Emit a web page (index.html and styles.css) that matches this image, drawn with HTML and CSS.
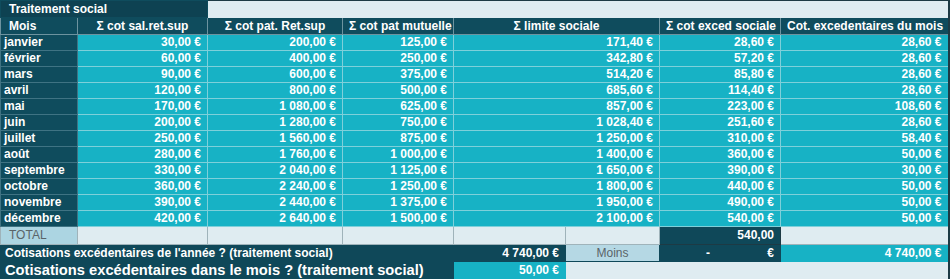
FILE: index.html
```html
<!DOCTYPE html>
<html lang="fr">
<head>
<meta charset="utf-8">
<title>Traitement social</title>
<link rel="stylesheet" href="styles.css">
</head>
<body>
<table class="sheet">
  <colgroup>
    <col class="c-mois"><col class="c-sal"><col class="c-pat"><col class="c-mut">
    <col class="c-lim1"><col class="c-lim2"><col class="c-exc"><col class="c-cot">
  </colgroup>
  <tr class="r-title">
    <td colspan="2" class="dark title">Traitement social</td>
    <td colspan="6" class="light"></td>
  </tr>
  <tr class="r-head">
    <th class="mois-h">Mois</th>
    <th>Σ cot sal.ret.sup</th>
    <th>Σ cot pat. Ret.sup</th>
    <th>Σ cot pat mutuelle</th>
    <th colspan="2">Σ limite sociale</th>
    <th>Σ cot exced sociale</th>
    <th>Cot. excedentaires du mois</th>
  </tr>
  <tr><td class="m">janvier</td><td class="v">30,00 €</td><td class="v">200,00 €</td><td class="v">125,00 €</td><td class="v" colspan="2">171,40 €</td><td class="v">28,60 €</td><td class="v">28,60 €</td></tr>
  <tr><td class="m">février</td><td class="v">60,00 €</td><td class="v">400,00 €</td><td class="v">250,00 €</td><td class="v" colspan="2">342,80 €</td><td class="v">57,20 €</td><td class="v">28,60 €</td></tr>
  <tr><td class="m">mars</td><td class="v">90,00 €</td><td class="v">600,00 €</td><td class="v">375,00 €</td><td class="v" colspan="2">514,20 €</td><td class="v">85,80 €</td><td class="v">28,60 €</td></tr>
  <tr><td class="m">avril</td><td class="v">120,00 €</td><td class="v">800,00 €</td><td class="v">500,00 €</td><td class="v" colspan="2">685,60 €</td><td class="v">114,40 €</td><td class="v">28,60 €</td></tr>
  <tr><td class="m">mai</td><td class="v">170,00 €</td><td class="v">1 080,00 €</td><td class="v">625,00 €</td><td class="v" colspan="2">857,00 €</td><td class="v">223,00 €</td><td class="v">108,60 €</td></tr>
  <tr><td class="m">juin</td><td class="v">200,00 €</td><td class="v">1 280,00 €</td><td class="v">750,00 €</td><td class="v" colspan="2">1 028,40 €</td><td class="v">251,60 €</td><td class="v">28,60 €</td></tr>
  <tr><td class="m">juillet</td><td class="v">250,00 €</td><td class="v">1 560,00 €</td><td class="v">875,00 €</td><td class="v" colspan="2">1 250,00 €</td><td class="v">310,00 €</td><td class="v">58,40 €</td></tr>
  <tr><td class="m">août</td><td class="v">280,00 €</td><td class="v">1 760,00 €</td><td class="v">1 000,00 €</td><td class="v" colspan="2">1 400,00 €</td><td class="v">360,00 €</td><td class="v">50,00 €</td></tr>
  <tr><td class="m">septembre</td><td class="v">330,00 €</td><td class="v">2 040,00 €</td><td class="v">1 125,00 €</td><td class="v" colspan="2">1 650,00 €</td><td class="v">390,00 €</td><td class="v">30,00 €</td></tr>
  <tr><td class="m">octobre</td><td class="v">360,00 €</td><td class="v">2 240,00 €</td><td class="v">1 250,00 €</td><td class="v" colspan="2">1 800,00 €</td><td class="v">440,00 €</td><td class="v">50,00 €</td></tr>
  <tr><td class="m">novembre</td><td class="v">390,00 €</td><td class="v">2 440,00 €</td><td class="v">1 375,00 €</td><td class="v" colspan="2">1 950,00 €</td><td class="v">490,00 €</td><td class="v">50,00 €</td></tr>
  <tr><td class="m">décembre</td><td class="v">420,00 €</td><td class="v">2 640,00 €</td><td class="v">1 500,00 €</td><td class="v" colspan="2">2 100,00 €</td><td class="v">540,00 €</td><td class="v">50,00 €</td></tr>
  <tr class="r-total">
    <td class="total">TOTAL</td>
    <td class="light"></td><td class="light"></td><td class="light"></td><td class="light"></td><td class="light"></td>
    <td class="dark num">540,00</td>
    <td class="light"></td>
  </tr>
  <tr class="r-year">
    <td colspan="4" class="dark label">Cotisations excédentaires de l'année ? (traitement social)</td>
    <td class="dark num">4 740,00 €</td>
    <td class="pale">Moins</td>
    <td class="dark acct"><span>-</span><span>€</span></td>
    <td class="v">4 740,00 €</td>
  </tr>
  <tr class="r-month">
    <td colspan="4" class="dark label big">Cotisations excédentaires dans le mois ? (traitement social)</td>
    <td class="v">50,00 €</td>
    <td colspan="3" class="light end"></td>
  </tr>
</table>
</body>
</html>
```

FILE: styles.css
```css
html, body {
  margin: 0;
  padding: 0;
  background: #dfecf1;
}

.sheet {
  border-collapse: collapse;
  table-layout: fixed;
  width: 949px;
  font-family: "Liberation Sans", Arial, sans-serif;
  font-size: 12px;
  font-weight: bold;
  color: #ffffff;
  border-right: 2px solid #1d3a44;
  border-bottom: 2px solid #1d3a44;
}

.c-mois { width: 77px; }
.c-sal { width: 130px; }
.c-pat { width: 135px; }
.c-mut { width: 111px; }
.c-lim1 { width: 112px; }
.c-lim2 { width: 94px; }
.c-exc { width: 121px; }
.c-cot { width: 168px; }

.sheet td, .sheet th {
  height: 15px;
  line-height: 15px;
  padding: 0 6px;
  white-space: nowrap;
  overflow: hidden;
  border: 1px solid #7fd0da;
}

.sheet th {
  height: 16px;
  background: #0f4c5d;
  text-align: center;
  font-weight: bold;
  border-color: #6d939f;
  border-top-color: #0f4c5d;
}

.sheet th.mois-h {
  text-align: left;
  padding-left: 8px;
}

.r-title td {
  height: 16px;
  border-color: #0f4c5d;
}

.r-title .light {
  border-color: #dfecf1;
  border-top-color: #1d3a44;
}

.dark {
  background: #0f4859;
}

.title {
  background: #0e4252;
  padding-left: 8px !important;
}

.light {
  background: #dfecf1;
}

.m {
  background: #0f4c5d;
  text-align: left;
  padding-left: 3px !important;
  border-color: #3f7383 !important;
}

.v {
  background: #17b2c5;
  text-align: right;
}

.num {
  text-align: right;
}

.r-total td {
  height: 17px;
  border-color: #9fb3ba;
}

.total {
  background: #acd5e2;
  color: #5a6468;
  font-weight: normal;
  font-size: 12px;
  padding-left: 8px !important;
}

.r-total .dark {
  border-color: #1d3a44;
}

.r-year td {
  height: 16px;
  border-color: #0f4859;
}

.r-year .v {
  border-color: #17b2c5;
}

.label {
  text-align: left;
  padding-left: 4px !important;
}

.pale {
  background: #b5d8e4;
  color: #5a6468;
  font-weight: normal;
  text-align: center;
}

.acct span:first-child {
  display: inline-block;
  width: 48px;
  text-align: left;
  padding-left: 40px;
}

.acct span:last-child {
  display: inline-block;
  width: 20px;
  text-align: right;
}

.r-month td {
  height: 17px;
  border-color: #0f4859;
}

.big {
  font-size: 14.7px;
}

.r-month .v {
  border-color: #17b2c5;
}

.r-month .end {
  border-color: #dfecf1;
  border-bottom-color: #1d3a44;
}
```
